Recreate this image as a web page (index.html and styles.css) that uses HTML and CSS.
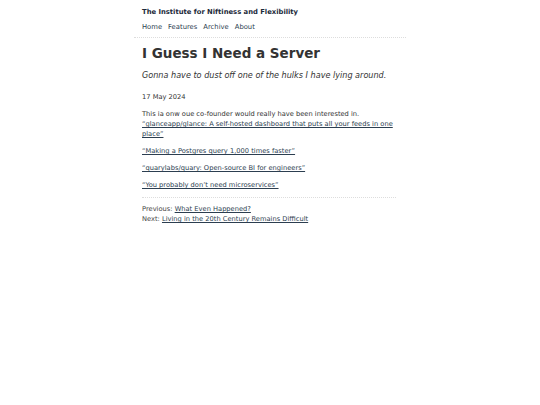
FILE: index.html
```html
<!DOCTYPE html>
<html lang="en">
<head>
<meta charset="utf-8">
<title>I Guess I Need a Server</title>
<link rel="stylesheet" href="styles.css">
</head>
<body>
<div class="page">
  <header class="site-header">
    <div class="site-title">The Institute for Niftiness and Flexibility</div>
    <nav class="nav">
      <a href="#">Home</a>
      <a href="#">Features</a>
      <a href="#">Archive</a>
      <a href="#">About</a>
    </nav>
  </header>
  <main class="content">
    <h1 class="post-title">I Guess I Need a Server</h1>
    <p class="subtitle">Gonna have to dust off one of the hulks I have lying around.</p>
    <p class="date">17 May 2024</p>
    <p>This ia onw oue co-founder would really have been interested in.<br>
      <a href="#">“glanceapp/glance: A self-hosted dashboard that puts all your feeds in one place”</a></p>
    <p><a href="#">“Making a Postgres query 1,000 times faster”</a></p>
    <p><a href="#">“quarylabs/quary: Open-source BI for engineers”</a></p>
    <p><a href="#">“You probably don’t need microservices”</a></p>
    <footer class="post-nav">
      <div>Previous: <a href="#">What Even Happened?</a></div>
      <div>Next: <a href="#">Living in the 20th Century Remains Difficult</a></div>
    </footer>
  </main>
</div>
</body>
</html>
```

FILE: styles.css
```css
html, body {
  margin: 0;
  padding: 0;
  background: #fff;
}
body {
  font-family: "DejaVu Sans", sans-serif;
  font-size: 6.7px;
  line-height: 10px;
  color: #333;
}
.page {
  width: 272px;
  margin: 0 auto;
}
.site-header {
  padding: 7px 10px 5px 8px;
  border-bottom: 1px dotted #ddd;
}
.site-title {
  font-weight: bold;
  font-size: 6.8px;
  color: #1c2a3a;
  line-height: 10px;
}
.nav {
  display: flex;
  gap: 6px;
  margin-top: 5px;
  font-size: 6.8px;
}
.nav a {
  color: #2c3e50;
  text-decoration: none;
}
.content {
  padding: 6px 10px 6px 8px;
}
.post-title {
  font-size: 13.5px;
  line-height: 18px;
  margin: 0 0 7px;
  color: #333;
}
.subtitle {
  font-style: italic;
  font-size: 8.1px;
  line-height: 12px;
  margin: 0 0 11px;
  color: #333;
}
p {
  margin: 0 0 7px;
}
a {
  color: #2c3e50;
}
.date {
  margin-bottom: 7px;
}
.post-nav {
  border-top: 1px dotted #ddd;
  margin-top: 5px;
  padding-top: 6px;
  color: #444;
}
```
